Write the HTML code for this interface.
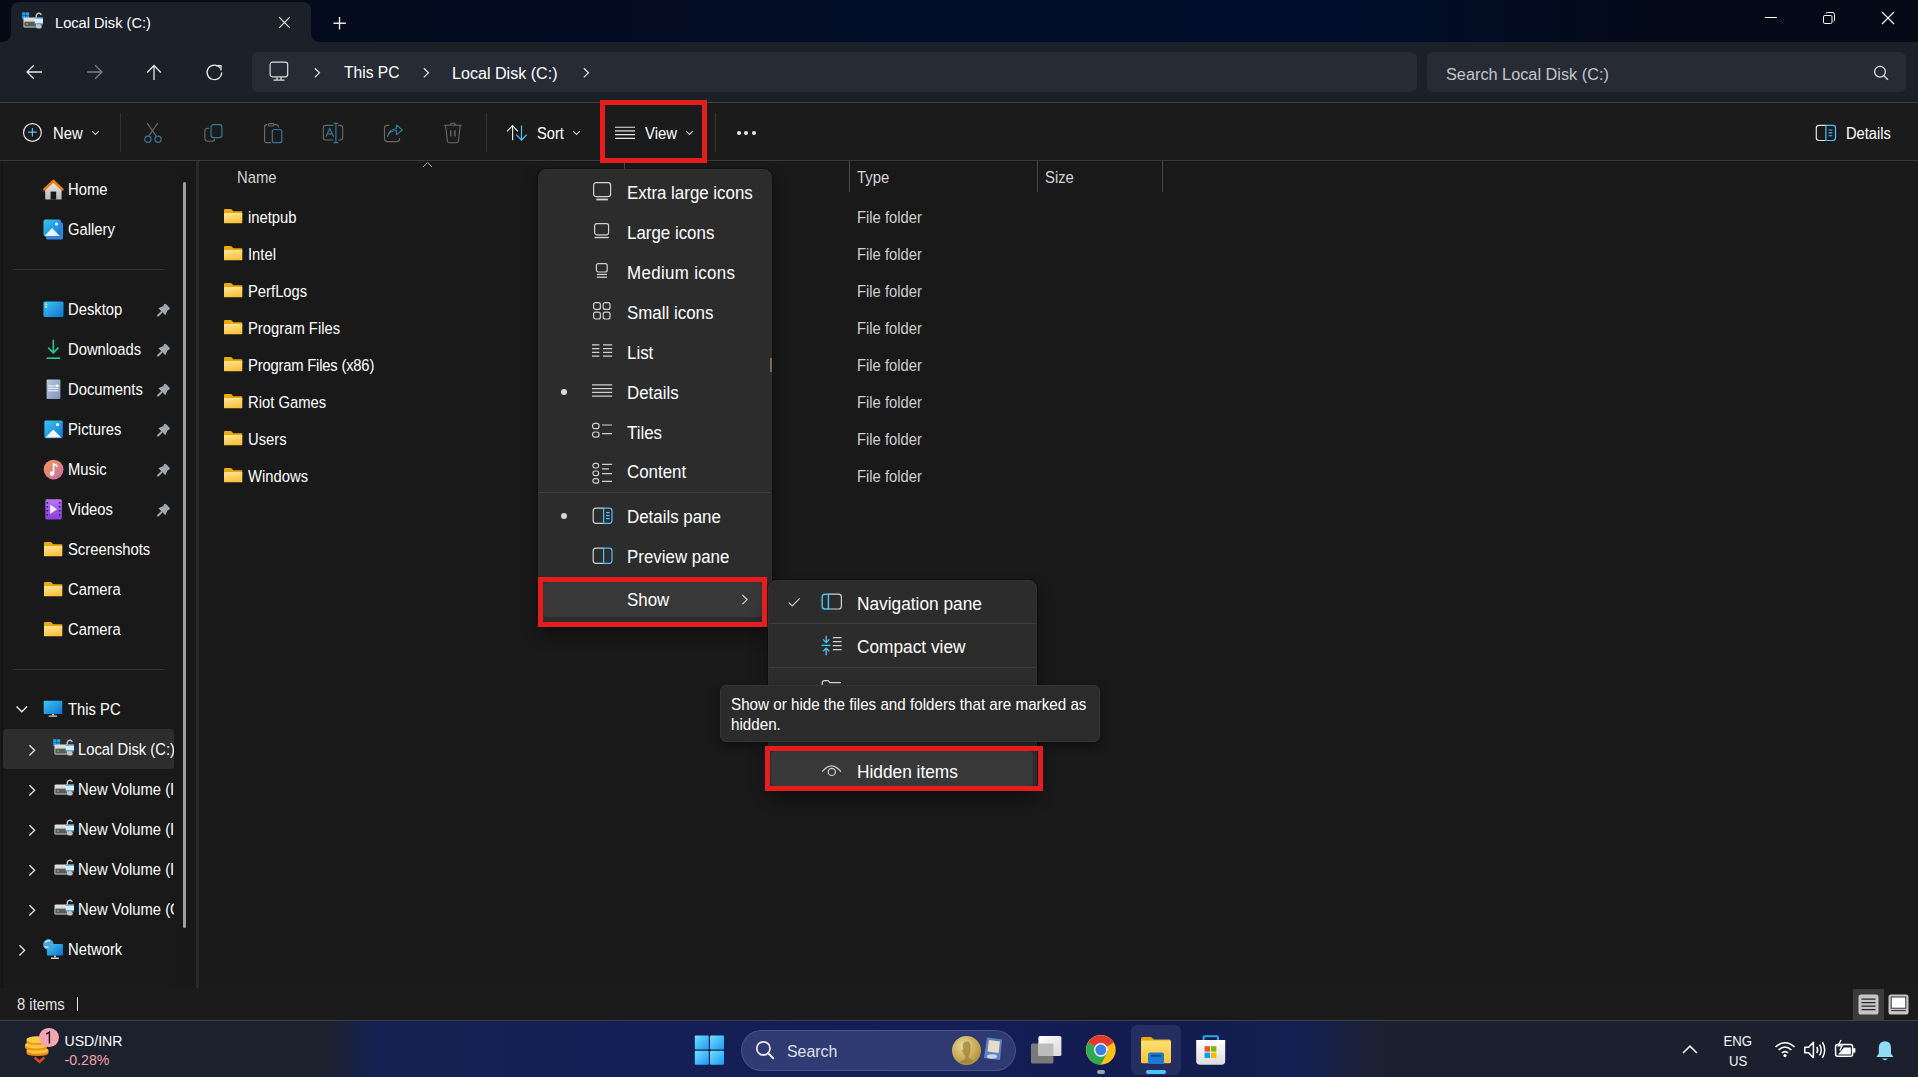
<!DOCTYPE html><html><head><meta charset="utf-8"><style>
*{margin:0;padding:0;box-sizing:border-box}
html,body{width:1918px;height:1077px;overflow:hidden;background:#191919}
body{position:relative;font-family:"Liberation Sans", sans-serif}
.t{position:absolute;white-space:nowrap;transform:scaleY(1.06)}
</style></head><body><div style="position:absolute;left:0px;top:0px;width:1918px;height:42px;background:linear-gradient(90deg,#040a18 0%,#030b1f 20%,#010c27 50%,#000d2a 70%,#040a18 88%,#050a17 100%)"></div><div style="position:absolute;left:11px;top:2px;width:300px;height:40px;background:#1c2029;border-radius:8px 8px 0 0"></div><div style="position:absolute;left:3px;top:34px;width:8px;height:8px;background:radial-gradient(circle at 0 0, transparent 7.5px, #1c2029 8px)"></div><div style="position:absolute;left:311px;top:34px;width:8px;height:8px;background:radial-gradient(circle at 100% 0, transparent 7.5px, #1c2029 8px)"></div><div style="position:absolute;left:0px;top:42px;width:1918px;height:60px;background:#1c2029"></div><div style="position:absolute;left:0px;top:102px;width:1918px;height:1px;background:#3c4048"></div><div style="position:absolute;left:252px;top:52px;width:1165px;height:40px;background:#272b35;border-radius:6px"></div><div style="position:absolute;left:1427px;top:52px;width:479px;height:40px;background:#272b35;border-radius:6px"></div><div style="position:absolute;left:0px;top:103px;width:1918px;height:57px;background:#1b1b1b"></div><div style="position:absolute;left:0px;top:160px;width:1918px;height:1px;background:#3a3a3a"></div><div style="position:absolute;left:0px;top:161px;width:197px;height:827px;background:#191919"></div><div style="position:absolute;left:175px;top:161px;width:21px;height:827px;background:#181818"></div><div style="position:absolute;left:196px;top:161px;width:3px;height:827px;background:#2a2a2a"></div><div style="position:absolute;left:199px;top:161px;width:1719px;height:827px;background:#191919"></div><div style="position:absolute;left:0px;top:988px;width:1918px;height:32px;background:#1b1b1b"></div><div style="position:absolute;left:0px;top:1020px;width:1918px;height:57px;background:linear-gradient(90deg,#1c212e 0%,#1c212e 17%,#132253 19.8%,#131f55 35%,#141d56 50%,#121c4e 62%,#131f52 67.8%,#1c202e 72.2%,#1c202e 100%)"></div><div style="position:absolute;left:0px;top:1020px;width:1918px;height:1px;background:#3a3f4d"></div><svg width="0" height="0" style="position:absolute"><defs>
<linearGradient id="fold" x1="0" y1="0" x2="0.3" y2="1"><stop offset="0" stop-color="#ffe79a"/><stop offset="1" stop-color="#f9c23c"/></linearGradient>
<linearGradient id="blue1" x1="0" y1="0" x2="1" y2="1"><stop offset="0" stop-color="#3ec6f0"/><stop offset="1" stop-color="#0d74d6"/></linearGradient>
<linearGradient id="music" x1="0" y1="0" x2="1" y2="1"><stop offset="0" stop-color="#f79a4e"/><stop offset="1" stop-color="#c56bb0"/></linearGradient>
<linearGradient id="video" x1="0" y1="0" x2="0" y2="1"><stop offset="0" stop-color="#b676f0"/><stop offset="1" stop-color="#8a3ee0"/></linearGradient>
<linearGradient id="house" x1="0" y1="0" x2="0" y2="1"><stop offset="0" stop-color="#e8e8e8"/><stop offset="1" stop-color="#b8b8b8"/></linearGradient>
<linearGradient id="doc" x1="0" y1="0" x2="1" y2="1"><stop offset="0" stop-color="#b8c8e0"/><stop offset="1" stop-color="#7d95b8"/></linearGradient>
</defs></svg><svg style="position:absolute;left:223.8px;top:208.8px" width="19" height="15" viewBox="0 0 19 15"><path d="M0 1 Q0 0 1 0 H6.6 Q7.3 0 7.8 0.6 L9.2 2.3 H17.4 Q18.3 2.3 18.3 3.2 V6 H0 Z" fill="#eaa90a"/><rect x="0" y="3.9" width="18.3" height="10.4" rx="0.9" fill="url(#fold)"/></svg><svg style="position:absolute;left:223.8px;top:245.8px" width="19" height="15" viewBox="0 0 19 15"><path d="M0 1 Q0 0 1 0 H6.6 Q7.3 0 7.8 0.6 L9.2 2.3 H17.4 Q18.3 2.3 18.3 3.2 V6 H0 Z" fill="#eaa90a"/><rect x="0" y="3.9" width="18.3" height="10.4" rx="0.9" fill="url(#fold)"/></svg><svg style="position:absolute;left:223.8px;top:282.8px" width="19" height="15" viewBox="0 0 19 15"><path d="M0 1 Q0 0 1 0 H6.6 Q7.3 0 7.8 0.6 L9.2 2.3 H17.4 Q18.3 2.3 18.3 3.2 V6 H0 Z" fill="#eaa90a"/><rect x="0" y="3.9" width="18.3" height="10.4" rx="0.9" fill="url(#fold)"/></svg><svg style="position:absolute;left:223.8px;top:319.8px" width="19" height="15" viewBox="0 0 19 15"><path d="M0 1 Q0 0 1 0 H6.6 Q7.3 0 7.8 0.6 L9.2 2.3 H17.4 Q18.3 2.3 18.3 3.2 V6 H0 Z" fill="#eaa90a"/><rect x="0" y="3.9" width="18.3" height="10.4" rx="0.9" fill="url(#fold)"/></svg><svg style="position:absolute;left:223.8px;top:356.8px" width="19" height="15" viewBox="0 0 19 15"><path d="M0 1 Q0 0 1 0 H6.6 Q7.3 0 7.8 0.6 L9.2 2.3 H17.4 Q18.3 2.3 18.3 3.2 V6 H0 Z" fill="#eaa90a"/><rect x="0" y="3.9" width="18.3" height="10.4" rx="0.9" fill="url(#fold)"/></svg><svg style="position:absolute;left:223.8px;top:393.8px" width="19" height="15" viewBox="0 0 19 15"><path d="M0 1 Q0 0 1 0 H6.6 Q7.3 0 7.8 0.6 L9.2 2.3 H17.4 Q18.3 2.3 18.3 3.2 V6 H0 Z" fill="#eaa90a"/><rect x="0" y="3.9" width="18.3" height="10.4" rx="0.9" fill="url(#fold)"/></svg><svg style="position:absolute;left:223.8px;top:430.8px" width="19" height="15" viewBox="0 0 19 15"><path d="M0 1 Q0 0 1 0 H6.6 Q7.3 0 7.8 0.6 L9.2 2.3 H17.4 Q18.3 2.3 18.3 3.2 V6 H0 Z" fill="#eaa90a"/><rect x="0" y="3.9" width="18.3" height="10.4" rx="0.9" fill="url(#fold)"/></svg><svg style="position:absolute;left:223.8px;top:467.8px" width="19" height="15" viewBox="0 0 19 15"><path d="M0 1 Q0 0 1 0 H6.6 Q7.3 0 7.8 0.6 L9.2 2.3 H17.4 Q18.3 2.3 18.3 3.2 V6 H0 Z" fill="#eaa90a"/><rect x="0" y="3.9" width="18.3" height="10.4" rx="0.9" fill="url(#fold)"/></svg><svg style="position:absolute;left:43.9px;top:541.9px" width="19" height="15" viewBox="0 0 19 15"><path d="M0 1 Q0 0 1 0 H6.6 Q7.3 0 7.8 0.6 L9.2 2.3 H17.4 Q18.3 2.3 18.3 3.2 V6 H0 Z" fill="#eaa90a"/><rect x="0" y="3.9" width="18.3" height="10.4" rx="0.9" fill="url(#fold)"/></svg><svg style="position:absolute;left:43.9px;top:581.9px" width="19" height="15" viewBox="0 0 19 15"><path d="M0 1 Q0 0 1 0 H6.6 Q7.3 0 7.8 0.6 L9.2 2.3 H17.4 Q18.3 2.3 18.3 3.2 V6 H0 Z" fill="#eaa90a"/><rect x="0" y="3.9" width="18.3" height="10.4" rx="0.9" fill="url(#fold)"/></svg><svg style="position:absolute;left:43.9px;top:621.9px" width="19" height="15" viewBox="0 0 19 15"><path d="M0 1 Q0 0 1 0 H6.6 Q7.3 0 7.8 0.6 L9.2 2.3 H17.4 Q18.3 2.3 18.3 3.2 V6 H0 Z" fill="#eaa90a"/><rect x="0" y="3.9" width="18.3" height="10.4" rx="0.9" fill="url(#fold)"/></svg><svg style="position:absolute;left:42.5px;top:178.5px" width="21" height="21" viewBox="0 0 21 21"><path d="M2.2 9.8 L10.4 2.8 L18.6 9.8 V19.4 Q18.6 20.6 17.4 20.6 H3.4 Q2.2 20.6 2.2 19.4 Z" fill="url(#house)"/><rect x="7.6" y="12.6" width="5.6" height="8" fill="#1b1b1b"/><path d="M1.4 10.4 L10.4 2 L19.4 10.4" fill="none" stroke="#f27a12" stroke-width="2.6" stroke-linejoin="round" stroke-linecap="round"/></svg><svg style="position:absolute;left:42.5px;top:218.5px" width="21" height="21" viewBox="0 0 21 21"><rect x="3" y="3.5" width="17" height="17" rx="1.5" fill="#3a86d8"/><rect x="0.5" y="0.5" width="17.6" height="17" rx="2" fill="url(#blue1)"/><path d="M1.5 17 L9 9 L17 17 Z" fill="#e8f3ff"/><circle cx="13.5" cy="5" r="1.5" fill="#fff"/></svg><svg style="position:absolute;left:42.5px;top:300.5px" width="21" height="17" viewBox="0 0 21 17"><rect x="0.5" y="0.5" width="20" height="15.5" rx="1.6" fill="url(#blue1)"/><rect x="2.5" y="2.5" width="1.6" height="1.6" fill="#e8f8ff"/><rect x="2.5" y="5" width="1.6" height="1.6" fill="#e8f8ff"/></svg><svg style="position:absolute;left:45.5px;top:338.5px" width="15" height="21" viewBox="0 0 15 21"><path d="M7.3 0.8 V13.5 M2.2 8.6 L7.3 13.8 L12.4 8.6" fill="none" stroke="#2cc59a" stroke-width="1.6"/><rect x="0.6" y="18.4" width="13.6" height="1.6" fill="#2cc59a"/></svg><svg style="position:absolute;left:45.5px;top:378.5px" width="15" height="21" viewBox="0 0 15 21"><rect x="0.6" y="0.6" width="13.8" height="19.4" rx="1.2" fill="url(#doc)"/><path d="M2.2 7 H9 M2.2 9.4 H12.6 M2.2 11.8 H12.6" stroke="#f4f8ff" stroke-width="1"/><rect x="9.6" y="5.6" width="3" height="2.4" fill="#fff"/></svg><svg style="position:absolute;left:43.5px;top:419.5px" width="19" height="19" viewBox="0 0 19 19"><rect x="0.4" y="0.4" width="18.4" height="17.8" rx="1.4" fill="url(#blue1)"/><path d="M1.5 17.6 L9.2 9.6 L17.4 17.6 Z" fill="#eef6ff"/><circle cx="13.6" cy="4.6" r="1.6" fill="#fff"/></svg><svg style="position:absolute;left:42.5px;top:458.5px" width="21" height="21" viewBox="0 0 21 21"><circle cx="10.6" cy="10.6" r="9.9" fill="url(#music)"/><circle cx="9" cy="14.6" r="2.3" fill="#fff"/><path d="M10.6 14.4 V5 Q13.8 5.4 14 8" fill="none" stroke="#fff" stroke-width="1.6"/></svg><svg style="position:absolute;left:44.5px;top:498.5px" width="17" height="21" viewBox="0 0 17 21"><rect x="0.4" y="0.2" width="16.4" height="20.2" rx="1.5" fill="url(#video)"/><g fill="#3a1670"><rect x="1.5" y="3" width="1.6" height="1.6"/><rect x="1.5" y="7" width="1.6" height="1.6"/><rect x="1.5" y="11" width="1.6" height="1.6"/><rect x="1.5" y="15" width="1.6" height="1.6"/><rect x="13.8" y="3" width="1.6" height="1.6"/><rect x="13.8" y="7" width="1.6" height="1.6"/><rect x="13.8" y="11" width="1.6" height="1.6"/><rect x="13.8" y="15" width="1.6" height="1.6"/></g><path d="M5.2 5.6 L12 10.3 L5.2 15 Z" fill="#f2e8ff"/></svg><svg style="position:absolute;left:156px;top:302.5px" width="15" height="15" viewBox="0 0 15 15"><path d="M8.2 1.2 Q9.2 0.2 10.2 1.2 L13.4 4.4 Q14.4 5.4 13.4 6.4 L11.6 7.2 L9.4 12.2 L2.4 5.2 L7.4 3 Z" fill="#a2a9ae"/><path d="M5.4 9.2 L2 12.6" stroke="#a2a9ae" stroke-width="2" stroke-linecap="round"/></svg><svg style="position:absolute;left:156px;top:342.5px" width="15" height="15" viewBox="0 0 15 15"><path d="M8.2 1.2 Q9.2 0.2 10.2 1.2 L13.4 4.4 Q14.4 5.4 13.4 6.4 L11.6 7.2 L9.4 12.2 L2.4 5.2 L7.4 3 Z" fill="#a2a9ae"/><path d="M5.4 9.2 L2 12.6" stroke="#a2a9ae" stroke-width="2" stroke-linecap="round"/></svg><svg style="position:absolute;left:156px;top:382.5px" width="15" height="15" viewBox="0 0 15 15"><path d="M8.2 1.2 Q9.2 0.2 10.2 1.2 L13.4 4.4 Q14.4 5.4 13.4 6.4 L11.6 7.2 L9.4 12.2 L2.4 5.2 L7.4 3 Z" fill="#a2a9ae"/><path d="M5.4 9.2 L2 12.6" stroke="#a2a9ae" stroke-width="2" stroke-linecap="round"/></svg><svg style="position:absolute;left:156px;top:422.5px" width="15" height="15" viewBox="0 0 15 15"><path d="M8.2 1.2 Q9.2 0.2 10.2 1.2 L13.4 4.4 Q14.4 5.4 13.4 6.4 L11.6 7.2 L9.4 12.2 L2.4 5.2 L7.4 3 Z" fill="#a2a9ae"/><path d="M5.4 9.2 L2 12.6" stroke="#a2a9ae" stroke-width="2" stroke-linecap="round"/></svg><svg style="position:absolute;left:156px;top:462.5px" width="15" height="15" viewBox="0 0 15 15"><path d="M8.2 1.2 Q9.2 0.2 10.2 1.2 L13.4 4.4 Q14.4 5.4 13.4 6.4 L11.6 7.2 L9.4 12.2 L2.4 5.2 L7.4 3 Z" fill="#a2a9ae"/><path d="M5.4 9.2 L2 12.6" stroke="#a2a9ae" stroke-width="2" stroke-linecap="round"/></svg><svg style="position:absolute;left:156px;top:502.5px" width="15" height="15" viewBox="0 0 15 15"><path d="M8.2 1.2 Q9.2 0.2 10.2 1.2 L13.4 4.4 Q14.4 5.4 13.4 6.4 L11.6 7.2 L9.4 12.2 L2.4 5.2 L7.4 3 Z" fill="#a2a9ae"/><path d="M5.4 9.2 L2 12.6" stroke="#a2a9ae" stroke-width="2" stroke-linecap="round"/></svg><div style="position:absolute;left:1px;top:161px;width:2px;height:827px;background:#151515"></div><div style="position:absolute;left:13px;top:269px;width:151px;height:1px;background:#333333"></div><div style="position:absolute;left:13px;top:669px;width:151px;height:1px;background:#333333"></div><div style="position:absolute;left:183px;top:182px;width:3px;height:746px;background:#9e9e9e;border-radius:2px"></div><svg style="position:absolute;left:14.5px;top:704.5px" width="14" height="9" viewBox="0 0 14 9"><path d="M1.5 1.5 L6.8 6.8 L12.1 1.5" fill="none" stroke="#e6e6e6" stroke-width="1.4"/></svg><svg style="position:absolute;left:43px;top:700px" width="20" height="18" viewBox="0 0 20 18"><rect x="0.7" y="0.7" width="18.5" height="13.3" rx="0.8" fill="url(#blue1)"/><rect x="9" y="14" width="2" height="1.6" fill="#c8c8c8"/><rect x="5.6" y="15.4" width="8.6" height="1.4" rx="0.6" fill="#d0d0d0"/></svg><div style="position:absolute;left:3px;top:729px;width:171px;height:40px;background:#2d2d2d;border-radius:4px"></div><svg style="position:absolute;left:28px;top:743.5px" width="9" height="13" viewBox="0 0 9 13"><path d="M1.4 1.2 L6.6 6.3 L1.4 11.4" fill="none" stroke="#e0e0e0" stroke-width="1.4"/></svg><svg style="position:absolute;left:52.6px;top:738.5px" width="22" height="17" viewBox="0 0 22 17"><rect x="0.2" y="0.3" width="3.3" height="3.3" fill="#1ea7f2"/><rect x="3.9" y="0.3" width="3.3" height="3.3" fill="#1ea7f2"/><rect x="0.2" y="4" width="3.3" height="3.3" fill="#1ea7f2"/><rect x="3.9" y="4" width="3.3" height="3.3" fill="#1a8ee0"/><rect x="1.5" y="5.6" width="13.5" height="10" rx="1.3" fill="#dcdcdc"/><rect x="2.3" y="9.6" width="11.8" height="5" fill="#5a5a5a"/><circle cx="5.1" cy="11.9" r="0.9" fill="#3de03d"/><path d="M14.3 5.8 V3.6 A2.6 2.6 0 0 1 19.3 2.9" fill="none" stroke="#c8c8c8" stroke-width="1.4"/><rect x="14" y="12" width="5.8" height="4.6" rx="2.2" fill="#c4c4c4"/><rect x="12.8" y="5.6" width="8.2" height="6.6" fill="#e8e8e8"/><rect x="12.8" y="5.6" width="8.2" height="1.1" fill="#2aa8f0"/><rect x="12.8" y="11.2" width="8.2" height="1.1" fill="#2aa8f0"/></svg><svg style="position:absolute;left:28px;top:783.5px" width="9" height="13" viewBox="0 0 9 13"><path d="M1.4 1.2 L6.6 6.3 L1.4 11.4" fill="none" stroke="#e0e0e0" stroke-width="1.4"/></svg><svg style="position:absolute;left:52.6px;top:778.5px" width="22" height="17" viewBox="0 0 22 17"><rect x="1.5" y="5.6" width="13.5" height="10" rx="1.3" fill="#dcdcdc"/><rect x="2.3" y="9.6" width="11.8" height="5" fill="#5a5a5a"/><circle cx="5.1" cy="11.9" r="0.9" fill="#3de03d"/><path d="M14.3 5.8 V3.6 A2.6 2.6 0 0 1 19.3 2.9" fill="none" stroke="#c8c8c8" stroke-width="1.4"/><rect x="14" y="12" width="5.8" height="4.6" rx="2.2" fill="#c4c4c4"/><rect x="12.8" y="5.6" width="8.2" height="6.6" fill="#e8e8e8"/><rect x="12.8" y="5.6" width="8.2" height="1.1" fill="#2aa8f0"/><rect x="12.8" y="11.2" width="8.2" height="1.1" fill="#2aa8f0"/></svg><svg style="position:absolute;left:28px;top:823.5px" width="9" height="13" viewBox="0 0 9 13"><path d="M1.4 1.2 L6.6 6.3 L1.4 11.4" fill="none" stroke="#e0e0e0" stroke-width="1.4"/></svg><svg style="position:absolute;left:52.6px;top:818.5px" width="22" height="17" viewBox="0 0 22 17"><rect x="1.5" y="5.6" width="13.5" height="10" rx="1.3" fill="#dcdcdc"/><rect x="2.3" y="9.6" width="11.8" height="5" fill="#5a5a5a"/><circle cx="5.1" cy="11.9" r="0.9" fill="#3de03d"/><path d="M14.3 5.8 V3.6 A2.6 2.6 0 0 1 19.3 2.9" fill="none" stroke="#c8c8c8" stroke-width="1.4"/><rect x="14" y="12" width="5.8" height="4.6" rx="2.2" fill="#c4c4c4"/><rect x="12.8" y="5.6" width="8.2" height="6.6" fill="#e8e8e8"/><rect x="12.8" y="5.6" width="8.2" height="1.1" fill="#2aa8f0"/><rect x="12.8" y="11.2" width="8.2" height="1.1" fill="#2aa8f0"/></svg><svg style="position:absolute;left:28px;top:863.5px" width="9" height="13" viewBox="0 0 9 13"><path d="M1.4 1.2 L6.6 6.3 L1.4 11.4" fill="none" stroke="#e0e0e0" stroke-width="1.4"/></svg><svg style="position:absolute;left:52.6px;top:858.5px" width="22" height="17" viewBox="0 0 22 17"><rect x="1.5" y="5.6" width="13.5" height="10" rx="1.3" fill="#dcdcdc"/><rect x="2.3" y="9.6" width="11.8" height="5" fill="#5a5a5a"/><circle cx="5.1" cy="11.9" r="0.9" fill="#3de03d"/><path d="M14.3 5.8 V3.6 A2.6 2.6 0 0 1 19.3 2.9" fill="none" stroke="#c8c8c8" stroke-width="1.4"/><rect x="14" y="12" width="5.8" height="4.6" rx="2.2" fill="#c4c4c4"/><rect x="12.8" y="5.6" width="8.2" height="6.6" fill="#e8e8e8"/><rect x="12.8" y="5.6" width="8.2" height="1.1" fill="#2aa8f0"/><rect x="12.8" y="11.2" width="8.2" height="1.1" fill="#2aa8f0"/></svg><svg style="position:absolute;left:28px;top:903.5px" width="9" height="13" viewBox="0 0 9 13"><path d="M1.4 1.2 L6.6 6.3 L1.4 11.4" fill="none" stroke="#e0e0e0" stroke-width="1.4"/></svg><svg style="position:absolute;left:52.6px;top:898.5px" width="22" height="17" viewBox="0 0 22 17"><rect x="1.5" y="5.6" width="13.5" height="10" rx="1.3" fill="#dcdcdc"/><rect x="2.3" y="9.6" width="11.8" height="5" fill="#5a5a5a"/><circle cx="5.1" cy="11.9" r="0.9" fill="#3de03d"/><path d="M14.3 5.8 V3.6 A2.6 2.6 0 0 1 19.3 2.9" fill="none" stroke="#c8c8c8" stroke-width="1.4"/><rect x="14" y="12" width="5.8" height="4.6" rx="2.2" fill="#c4c4c4"/><rect x="12.8" y="5.6" width="8.2" height="6.6" fill="#e8e8e8"/><rect x="12.8" y="5.6" width="8.2" height="1.1" fill="#2aa8f0"/><rect x="12.8" y="11.2" width="8.2" height="1.1" fill="#2aa8f0"/></svg><svg style="position:absolute;left:18px;top:943.5px" width="9" height="13" viewBox="0 0 9 13"><path d="M1.4 1.2 L6.6 6.3 L1.4 11.4" fill="none" stroke="#e0e0e0" stroke-width="1.4"/></svg><svg style="position:absolute;left:42px;top:938px" width="22" height="22" viewBox="0 0 22 22"><rect x="5" y="6" width="15.9" height="11.6" rx="0.6" fill="url(#blue1)"/><rect x="12" y="17.6" width="2" height="1.6" fill="#c8c8c8"/><rect x="8.8" y="19.4" width="8.2" height="1.5" rx="0.6" fill="#d0d0d0"/><circle cx="6.4" cy="6.4" r="5.3" fill="#4aa8d8"/><path d="M3 4.4 Q5 2.4 8 3 M2.8 8.5 Q4.5 9.6 6.5 9" stroke="#e8f6ff" stroke-width="1.2" fill="none"/></svg><svg style="position:absolute;left:421.5px;top:161px" width="12" height="7" viewBox="0 0 12 7"><path d="M1 6 L5.5 1.5 L10 6" fill="none" stroke="#a8a8a8" stroke-width="1"/></svg><div style="position:absolute;left:624px;top:161px;width:1px;height:31px;background:#4a4a4a"></div><div style="position:absolute;left:849px;top:161px;width:1px;height:31px;background:#4a4a4a"></div><div style="position:absolute;left:1037px;top:161px;width:1px;height:31px;background:#4a4a4a"></div><div style="position:absolute;left:1162px;top:161px;width:1px;height:31px;background:#4a4a4a"></div><div style="position:absolute;left:77px;top:997px;width:1px;height:14px;background:#e8e8e8"></div><div style="position:absolute;left:1853px;top:989px;width:31px;height:31px;background:#3b3b3b"></div><svg style="position:absolute;left:1858px;top:994px" width="21" height="21" viewBox="0 0 21 21"><rect x="0.5" y="0.5" width="20" height="20" rx="2.6" fill="#c6c6c6"/><path d="M3.5 5.2 H17.5 M3.5 8.7 H17.5 M3.5 12.2 H17.5 M3.5 15.7 H17.5" stroke="#262626" stroke-width="1.2"/></svg><svg style="position:absolute;left:1888px;top:993.5px" width="22" height="21" viewBox="0 0 22 21"><rect x="0.5" y="0.5" width="20" height="20" rx="2.6" fill="#c6c6c6"/><rect x="3.2" y="3" width="14.6" height="11.2" fill="#fff" stroke="#262626" stroke-width="0.9"/><path d="M3.2 16.6 H17.8" stroke="#262626" stroke-width="1"/></svg><div class="t" style="left:55.00px;top:16.31px;font-size:14.64px;line-height:14.64px;color:#fff;transform-origin:0 12.39px;">Local Disk (C:)</div><div class="t" style="left:344.00px;top:65.39px;font-size:15.6px;line-height:15.6px;color:#fff;transform-origin:0 13.21px;">This PC</div><div class="t" style="left:452.00px;top:65.37px;font-size:16.1px;line-height:16.1px;color:#fff;transform-origin:0 13.63px;">Local Disk (C:)</div><div class="t" style="left:1446.00px;top:65.50px;font-size:16.3px;line-height:16.3px;color:#c5c6c9;transform-origin:0 13.80px;">Search Local Disk (C:)</div><div class="t" style="left:53.00px;top:127.07px;font-size:14.8px;line-height:14.8px;color:#fff;transform-origin:0 12.53px;">New</div><div class="t" style="left:537.00px;top:127.36px;font-size:14.7px;line-height:14.7px;color:#fff;transform-origin:0 12.44px;">Sort</div><div class="t" style="left:645.00px;top:126.89px;font-size:14.9px;line-height:14.9px;color:#fff;transform-origin:0 12.61px;">View</div><div class="t" style="left:1846.00px;top:127.36px;font-size:14.7px;line-height:14.7px;color:#fff;transform-origin:0 12.44px;">Details</div><div class="t" style="left:68.00px;top:183.17px;font-size:14.8px;line-height:14.8px;color:#fff;transform-origin:0 12.53px;">Home</div><div class="t" style="left:68.00px;top:223.27px;font-size:14.8px;line-height:14.8px;color:#fff;transform-origin:0 12.53px;">Gallery</div><div class="t" style="left:68.00px;top:303.07px;font-size:14.8px;line-height:14.8px;color:#fff;transform-origin:0 12.53px;">Desktop</div><div class="t" style="left:68.00px;top:343.07px;font-size:14.8px;line-height:14.8px;color:#fff;transform-origin:0 12.53px;">Downloads</div><div class="t" style="left:68.00px;top:383.07px;font-size:14.8px;line-height:14.8px;color:#fff;transform-origin:0 12.53px;">Documents</div><div class="t" style="left:68.00px;top:423.07px;font-size:14.8px;line-height:14.8px;color:#fff;transform-origin:0 12.53px;">Pictures</div><div class="t" style="left:68.00px;top:463.07px;font-size:14.8px;line-height:14.8px;color:#fff;transform-origin:0 12.53px;">Music</div><div class="t" style="left:68.00px;top:503.07px;font-size:14.8px;line-height:14.8px;color:#fff;transform-origin:0 12.53px;">Videos</div><div class="t" style="left:68.00px;top:543.07px;font-size:14.8px;line-height:14.8px;color:#fff;transform-origin:0 12.53px;">Screenshots</div><div class="t" style="left:68.00px;top:583.07px;font-size:14.8px;line-height:14.8px;color:#fff;transform-origin:0 12.53px;">Camera</div><div class="t" style="left:68.00px;top:623.07px;font-size:14.8px;line-height:14.8px;color:#fff;transform-origin:0 12.53px;">Camera</div><div class="t" style="left:68.00px;top:703.07px;font-size:14.8px;line-height:14.8px;color:#fff;transform-origin:0 12.53px;">This PC</div><div class="t" style="left:78.00px;top:743.07px;font-size:14.8px;line-height:14.8px;color:#fff;transform-origin:0 12.53px;overflow:hidden;width:96px">Local Disk (C:)</div><div class="t" style="left:78.00px;top:783.07px;font-size:14.8px;line-height:14.8px;color:#fff;transform-origin:0 12.53px;overflow:hidden;width:96px">New Volume (I</div><div class="t" style="left:78.00px;top:823.07px;font-size:14.8px;line-height:14.8px;color:#fff;transform-origin:0 12.53px;overflow:hidden;width:96px">New Volume (I</div><div class="t" style="left:78.00px;top:863.07px;font-size:14.8px;line-height:14.8px;color:#fff;transform-origin:0 12.53px;overflow:hidden;width:96px">New Volume (I</div><div class="t" style="left:78.00px;top:903.07px;font-size:14.8px;line-height:14.8px;color:#fff;transform-origin:0 12.53px;overflow:hidden;width:96px">New Volume (G</div><div class="t" style="left:68.00px;top:943.07px;font-size:14.8px;line-height:14.8px;color:#fff;transform-origin:0 12.53px;">Network</div><div class="t" style="left:237.00px;top:170.93px;font-size:14.85px;line-height:14.85px;color:#d4d4d4;transform-origin:0 12.57px;">Name</div><div class="t" style="left:857.00px;top:170.93px;font-size:14.85px;line-height:14.85px;color:#d4d4d4;transform-origin:0 12.57px;">Type</div><div class="t" style="left:1045.00px;top:170.93px;font-size:14.85px;line-height:14.85px;color:#d4d4d4;transform-origin:0 12.57px;">Size</div><div class="t" style="left:248.00px;top:210.57px;font-size:14.8px;line-height:14.8px;color:#fff;transform-origin:0 12.53px;">inetpub</div><div class="t" style="left:857.00px;top:210.57px;font-size:14.8px;line-height:14.8px;color:#d0d0d0;transform-origin:0 12.53px;">File folder</div><div class="t" style="left:248.00px;top:247.57px;font-size:14.8px;line-height:14.8px;color:#fff;transform-origin:0 12.53px;">Intel</div><div class="t" style="left:857.00px;top:247.57px;font-size:14.8px;line-height:14.8px;color:#d0d0d0;transform-origin:0 12.53px;">File folder</div><div class="t" style="left:248.00px;top:284.57px;font-size:14.8px;line-height:14.8px;color:#fff;transform-origin:0 12.53px;">PerfLogs</div><div class="t" style="left:857.00px;top:284.57px;font-size:14.8px;line-height:14.8px;color:#d0d0d0;transform-origin:0 12.53px;">File folder</div><div class="t" style="left:248.00px;top:321.57px;font-size:14.8px;line-height:14.8px;color:#fff;transform-origin:0 12.53px;">Program Files</div><div class="t" style="left:857.00px;top:321.57px;font-size:14.8px;line-height:14.8px;color:#d0d0d0;transform-origin:0 12.53px;">File folder</div><div class="t" style="left:248.00px;top:358.57px;font-size:14.8px;line-height:14.8px;color:#fff;transform-origin:0 12.53px;letter-spacing:-0.2px">Program Files (x86)</div><div class="t" style="left:857.00px;top:358.57px;font-size:14.8px;line-height:14.8px;color:#d0d0d0;transform-origin:0 12.53px;">File folder</div><div class="t" style="left:248.00px;top:395.57px;font-size:14.8px;line-height:14.8px;color:#fff;transform-origin:0 12.53px;">Riot Games</div><div class="t" style="left:857.00px;top:395.57px;font-size:14.8px;line-height:14.8px;color:#d0d0d0;transform-origin:0 12.53px;">File folder</div><div class="t" style="left:248.00px;top:432.57px;font-size:14.8px;line-height:14.8px;color:#fff;transform-origin:0 12.53px;">Users</div><div class="t" style="left:857.00px;top:432.57px;font-size:14.8px;line-height:14.8px;color:#d0d0d0;transform-origin:0 12.53px;">File folder</div><div class="t" style="left:248.00px;top:469.57px;font-size:14.8px;line-height:14.8px;color:#fff;transform-origin:0 12.53px;">Windows</div><div class="t" style="left:857.00px;top:469.57px;font-size:14.8px;line-height:14.8px;color:#d0d0d0;transform-origin:0 12.53px;">File folder</div><div class="t" style="left:17.00px;top:998.07px;font-size:14.8px;line-height:14.8px;color:#e0e0e0;transform-origin:0 12.53px;">8 items</div><div style="position:absolute;left:538px;top:169px;width:234px;height:458px;background:#2c2c2c;border-radius:8px;border:1px solid #323232;box-shadow:0 0 0 1px rgba(0,0,0,0.3),0 8px 16px rgba(0,0,0,0.4)"></div><div style="position:absolute;left:539px;top:492px;width:232px;height:1px;background:#3d3d3d"></div><div style="position:absolute;left:543px;top:582px;width:219px;height:35px;background:#383838;border-radius:4px"></div><div style="position:absolute;left:768px;top:580px;width:269px;height:211px;background:#2c2c2c;border-radius:8px;border:1px solid #323232;box-shadow:0 0 0 1px rgba(0,0,0,0.3),0 8px 16px rgba(0,0,0,0.4)"></div><div style="position:absolute;left:769px;top:623px;width:267px;height:1px;background:#3d3d3d"></div><div style="position:absolute;left:769px;top:667px;width:267px;height:1px;background:#3d3d3d"></div><div style="position:absolute;left:771px;top:751px;width:262px;height:35px;background:#383838;border-radius:4px"></div><div style="position:absolute;left:720px;top:685px;width:380px;height:57px;background:#2b2b2b;border-radius:6px;border:1px solid #353535;box-shadow:0 4px 10px rgba(0,0,0,0.4)"></div><div class="t" style="left:627.00px;top:185.69px;font-size:16.9px;line-height:16.9px;color:#fff;transform-origin:0 14.31px;">Extra large icons</div><div class="t" style="left:627.00px;top:225.99px;font-size:16.9px;line-height:16.9px;color:#fff;transform-origin:0 14.31px;">Large icons</div><div class="t" style="left:627.00px;top:265.99px;font-size:16.9px;line-height:16.9px;color:#fff;transform-origin:0 14.31px;letter-spacing:0.35px">Medium icons</div><div class="t" style="left:627.00px;top:305.99px;font-size:16.9px;line-height:16.9px;color:#fff;transform-origin:0 14.31px;">Small icons</div><div class="t" style="left:627.00px;top:345.99px;font-size:16.9px;line-height:16.9px;color:#fff;transform-origin:0 14.31px;">List</div><div class="t" style="left:627.00px;top:385.99px;font-size:16.9px;line-height:16.9px;color:#fff;transform-origin:0 14.31px;">Details</div><div class="t" style="left:627.00px;top:425.59px;font-size:16.9px;line-height:16.9px;color:#fff;transform-origin:0 14.31px;">Tiles</div><div class="t" style="left:627.00px;top:465.49px;font-size:16.9px;line-height:16.9px;color:#fff;transform-origin:0 14.31px;">Content</div><div class="t" style="left:627.00px;top:509.99px;font-size:16.9px;line-height:16.9px;color:#fff;transform-origin:0 14.31px;">Details pane</div><div class="t" style="left:627.00px;top:549.99px;font-size:16.9px;line-height:16.9px;color:#fff;transform-origin:0 14.31px;">Preview pane</div><div class="t" style="left:627.00px;top:593.49px;font-size:16.9px;line-height:16.9px;color:#fff;transform-origin:0 14.31px;">Show</div><div class="t" style="left:857.00px;top:595.96px;font-size:17.3px;line-height:17.3px;color:#fff;transform-origin:0 14.64px;">Navigation pane</div><div class="t" style="left:857.00px;top:639.46px;font-size:17.3px;line-height:17.3px;color:#fff;transform-origin:0 14.64px;">Compact view</div><div class="t" style="left:857.00px;top:763.76px;font-size:17.3px;line-height:17.3px;color:#fff;transform-origin:0 14.64px;">Hidden items</div><div class="t" style="left:731.00px;top:696.73px;font-size:15.2px;line-height:15.2px;color:#fff;transform-origin:0 12.87px;">Show or hide the files and folders that are marked as</div><div class="t" style="left:731.00px;top:717.03px;font-size:15.2px;line-height:15.2px;color:#fff;transform-origin:0 12.87px;">hidden.</div><svg style="position:absolute;left:592px;top:181px" width="21" height="21" viewBox="0 0 21 21"><rect x="1.6" y="1.6" width="17" height="14" rx="2.6" fill="none" stroke="#d2d2d2" stroke-width="1.2"/><rect x="4.3" y="17.6" width="11.6" height="1.8" fill="#d2d2d2"/></svg><svg style="position:absolute;left:593px;top:222px" width="18" height="18" viewBox="0 0 18 18"><rect x="1.6" y="1.6" width="14" height="11.2" rx="2.2" fill="none" stroke="#d2d2d2" stroke-width="1.2"/><rect x="1.6" y="14.8" width="14.2" height="1.4" fill="#d2d2d2"/></svg><svg style="position:absolute;left:595px;top:262px" width="14" height="18" viewBox="0 0 14 18"><rect x="1.4" y="1.6" width="10.8" height="8.4" rx="2" fill="none" stroke="#d2d2d2" stroke-width="1.2"/><rect x="1.8" y="11.8" width="10.2" height="1.3" fill="#d2d2d2"/><rect x="1.8" y="14.6" width="10.2" height="1.3" fill="#d2d2d2"/></svg><svg style="position:absolute;left:592px;top:301px" width="21" height="20" viewBox="0 0 21 20"><rect x="1.6" y="1.6" width="6.8" height="6.8" rx="2" fill="none" stroke="#d2d2d2" stroke-width="1.2"/><rect x="11.2" y="1.6" width="6.8" height="6.8" rx="2" fill="none" stroke="#d2d2d2" stroke-width="1.2"/><rect x="1.6" y="11.2" width="6.8" height="6.8" rx="2" fill="none" stroke="#d2d2d2" stroke-width="1.2"/><rect x="11.2" y="11.2" width="6.8" height="6.8" rx="2" fill="none" stroke="#d2d2d2" stroke-width="1.2"/></svg><svg style="position:absolute;left:591px;top:343px" width="23" height="16" viewBox="0 0 23 16"><path d="M1 1.8 H8.4 M1 5.6 H8.4 M1 9.4 H8.4 M1 13.2 H8.4 M12 1.8 H21.2 M12 5.6 H21.2 M12 9.4 H21.2 M12 13.2 H21.2" stroke="#d2d2d2" stroke-width="1.2"/></svg><svg style="position:absolute;left:591px;top:383px" width="23" height="16" viewBox="0 0 23 16"><path d="M1 1.8 H21.2 M1 5.6 H21.2 M1 9.4 H21.2 M1 13.2 H21.2" stroke="#d2d2d2" stroke-width="1.2"/></svg><svg style="position:absolute;left:591px;top:422px" width="23" height="18" viewBox="0 0 23 18"><rect x="1.6" y="1.4" width="6.4" height="5.2" rx="2.2" fill="none" stroke="#d2d2d2" stroke-width="1.2"/><rect x="1.6" y="10" width="6.4" height="5.2" rx="2.2" fill="none" stroke="#d2d2d2" stroke-width="1.2"/><path d="M11 3 H21 M11 11.6 H21" stroke="#d2d2d2" stroke-width="1.2"/></svg><svg style="position:absolute;left:591px;top:462px" width="23" height="24" viewBox="0 0 23 24"><rect x="2" y="1.4" width="5.6" height="4.6" rx="2" fill="none" stroke="#d2d2d2" stroke-width="1.2"/><rect x="2" y="9" width="5.6" height="4.6" rx="2" fill="none" stroke="#d2d2d2" stroke-width="1.2"/><rect x="2" y="16.6" width="5.6" height="4.6" rx="2" fill="none" stroke="#d2d2d2" stroke-width="1.2"/><path d="M11 2.4 H21 M11 6.8 H18 M11 11.6 H21 M11 19.4 H21" stroke="#d2d2d2" stroke-width="1.2"/></svg><svg style="position:absolute;left:591.5px;top:506.5px" width="22" height="18" viewBox="0 0 22 18"><path d="M11.6 1.2 H4 Q1.2 1.2 1.2 4 V13.6 Q1.2 16.4 4 16.4 H11.6" fill="none" stroke="#d2d2d2" stroke-width="1.2"/><path d="M11.6 1.2 H17.2 Q20 1.2 20 4 V13.6 Q20 16.4 17.2 16.4 H11.6 Z" fill="none" stroke="#4cc2ff" stroke-width="1.2"/><path d="M14 5.6 H17.6 M14 8.6 H17.6 M14 11.6 H17.6" stroke="#4cc2ff" stroke-width="1.1"/></svg><svg style="position:absolute;left:591.5px;top:546.5px" width="22" height="18" viewBox="0 0 22 18"><path d="M11.6 1.2 H4 Q1.2 1.2 1.2 4 V13.6 Q1.2 16.4 4 16.4 H11.6" fill="none" stroke="#d2d2d2" stroke-width="1.2"/><path d="M11.6 1.2 H17.2 Q20 1.2 20 4 V13.6 Q20 16.4 17.2 16.4 H11.6 Z" fill="none" stroke="#4cc2ff" stroke-width="1.2"/></svg><div style="position:absolute;left:561.4px;top:388.5px;width:6px;height:6px;border-radius:50%;background:#d8d8d8"></div><div style="position:absolute;left:561.4px;top:512.5px;width:6px;height:6px;border-radius:50%;background:#d8d8d8"></div><svg style="position:absolute;left:741px;top:594px" width="9" height="12" viewBox="0 0 9 12"><path d="M1.4 1 L6.2 5.6 L1.4 10.2" fill="none" stroke="#d8d8d8" stroke-width="1.1"/></svg><svg style="position:absolute;left:787px;top:597px" width="15" height="11" viewBox="0 0 15 11"><path d="M1.8 5.6 L5.2 9 L12.8 1.4" fill="none" stroke="#cfcfcf" stroke-width="1.2"/></svg><svg style="position:absolute;left:821px;top:593px" width="22" height="18" viewBox="0 0 22 18"><path d="M7.4 1.2 H17.6 Q20.4 1.2 20.4 4 V13.2 Q20.4 16 17.6 16 H7.4" fill="none" stroke="#d2d2d2" stroke-width="1.2"/><path d="M7.4 1.2 H4 Q1.2 1.2 1.2 4 V13.2 Q1.2 16 4 16 H7.4 Z" fill="none" stroke="#4cc2ff" stroke-width="1.4"/></svg><svg style="position:absolute;left:821px;top:635px" width="22" height="22" viewBox="0 0 22 22"><path d="M5.2 0.8 V7.4 M2 4.4 L5.2 7.6 L8.4 4.4 M5.2 20.2 V13.2 M2 16.4 L5.2 13.2 L8.4 16.4 M0.6 10.3 H9.6" fill="none" stroke="#4cc2ff" stroke-width="1.3"/><path d="M11.8 2.6 H20.6 M11.8 6.6 H20.6 M11.8 10.6 H20.6 M11.8 14.6 H20.6" stroke="#d2d2d2" stroke-width="1.2"/></svg><svg style="position:absolute;left:821px;top:679px" width="22" height="6" viewBox="0 0 22 6"><path d="M1.2 7 V4 Q1.2 1.6 3.6 1.6 H7 L9 3.6 H20" fill="none" stroke="#d2d2d2" stroke-width="1.2"/></svg><svg style="position:absolute;left:821px;top:762px" width="22" height="15" viewBox="0 0 22 15"><path d="M1.2 9.6 Q10.6 -2 20 9.6" fill="none" stroke="#d2d2d2" stroke-width="1.2"/><circle cx="10.8" cy="9.9" r="3.6" fill="none" stroke="#d2d2d2" stroke-width="1.2"/></svg><div style="position:absolute;left:770px;top:358px;width:2px;height:14px;background:#7a6a50"></div><svg style="position:absolute;left:21.5px;top:11.5px" width="22" height="17" viewBox="0 0 22 17"><rect x="0.2" y="0.3" width="3.3" height="3.3" fill="#1ea7f2"/><rect x="3.9" y="0.3" width="3.3" height="3.3" fill="#1ea7f2"/><rect x="0.2" y="4" width="3.3" height="3.3" fill="#1ea7f2"/><rect x="3.9" y="4" width="3.3" height="3.3" fill="#1a8ee0"/><rect x="1.5" y="5.6" width="13.5" height="10" rx="1.3" fill="#dcdcdc"/><rect x="2.3" y="9.6" width="11.8" height="5" fill="#5a5a5a"/><circle cx="5.1" cy="11.9" r="0.9" fill="#3de03d"/><path d="M14.3 5.8 V3.6 A2.6 2.6 0 0 1 19.3 2.9" fill="none" stroke="#c8c8c8" stroke-width="1.4"/><rect x="14" y="12" width="5.8" height="4.6" rx="2.2" fill="#c4c4c4"/><rect x="12.8" y="5.6" width="8.2" height="6.6" fill="#e8e8e8"/><rect x="12.8" y="5.6" width="8.2" height="1.1" fill="#2aa8f0"/><rect x="12.8" y="11.2" width="8.2" height="1.1" fill="#2aa8f0"/></svg><svg style="position:absolute;left:278px;top:16px" width="14" height="13" viewBox="0 0 14 13"><path d="M1.2 1.2 L11.8 11.8 M11.8 1.2 L1.2 11.8" stroke="#e8e8e8" stroke-width="1.2"/></svg><svg style="position:absolute;left:332px;top:16px" width="15" height="15" viewBox="0 0 15 15"><path d="M7.5 1 V13.5 M1.5 7.2 H13.8" stroke="#e8e8e8" stroke-width="1.4"/></svg><svg style="position:absolute;left:1764px;top:16px" width="14" height="4" viewBox="0 0 14 4"><path d="M0.8 1.5 H13" stroke="#fff" stroke-width="1"/></svg><svg style="position:absolute;left:1822px;top:11px" width="14" height="14" viewBox="0 0 14 14"><rect x="1.5" y="4.5" width="8.5" height="8" rx="1.3" fill="none" stroke="#fff" stroke-width="1"/><path d="M4 2.5 Q4 1.5 5.5 1.5 H10.5 Q12.5 1.5 12.5 3.5 V9 Q12.5 10 11.5 10.2" fill="none" stroke="#fff" stroke-width="1"/></svg><svg style="position:absolute;left:1881px;top:11px" width="14" height="14" viewBox="0 0 14 14"><path d="M1 1 L13 13 M13 1 L1 13" stroke="#fff" stroke-width="1.1"/></svg><svg style="position:absolute;left:25px;top:63px" width="19" height="18" viewBox="0 0 19 18"><path d="M2 9 H17 M8.8 2.2 L2 9 L8.8 15.8" fill="none" stroke="#e6e6e6" stroke-width="1.3"/></svg><svg style="position:absolute;left:85px;top:63px" width="19" height="18" viewBox="0 0 19 18"><path d="M2 9 H17 M10.2 2.2 L17 9 L10.2 15.8" fill="none" stroke="#7c7f86" stroke-width="1.3"/></svg><svg style="position:absolute;left:146px;top:64px" width="16" height="17" viewBox="0 0 16 17"><path d="M8 1.5 V16 M1.2 8.5 L8 1.5 L14.8 8.5" fill="none" stroke="#e6e6e6" stroke-width="1.3"/></svg><svg style="position:absolute;left:205px;top:63px" width="19" height="19" viewBox="0 0 19 19"><path d="M15.4 5.2 A7.3 7.3 0 1 0 16.7 9.5" fill="none" stroke="#e6e6e6" stroke-width="1.3"/><path d="M11.2 2.6 H16 V7.4" fill="none" stroke="#e6e6e6" stroke-width="1.3"/></svg><svg style="position:absolute;left:269px;top:61px" width="20" height="21" viewBox="0 0 20 21"><rect x="1.1" y="1.1" width="17.6" height="14.8" rx="2.6" fill="none" stroke="#dcdcdc" stroke-width="1.2"/><path d="M8 16 V18.6 M12 16 V18.6 M4.5 19.2 H15.5" fill="none" stroke="#dcdcdc" stroke-width="1.2"/></svg><svg style="position:absolute;left:313px;top:67px" width="9" height="12" viewBox="0 0 9 12"><path d="M1.8 1.2 L6.5 5.8 L1.8 10.4" fill="none" stroke="#e6e6e6" stroke-width="1.2"/></svg><svg style="position:absolute;left:422px;top:67px" width="9" height="12" viewBox="0 0 9 12"><path d="M1.8 1.2 L6.5 5.8 L1.8 10.4" fill="none" stroke="#e6e6e6" stroke-width="1.2"/></svg><svg style="position:absolute;left:582px;top:67px" width="9" height="12" viewBox="0 0 9 12"><path d="M1.8 1.2 L6.5 5.8 L1.8 10.4" fill="none" stroke="#e6e6e6" stroke-width="1.2"/></svg><svg style="position:absolute;left:1872px;top:64px" width="18" height="18" viewBox="0 0 18 18"><circle cx="8" cy="7.7" r="5.4" fill="none" stroke="#dedede" stroke-width="1.3"/><path d="M11.9 11.7 L16 15.8" stroke="#dedede" stroke-width="1.4"/></svg><svg style="position:absolute;left:22px;top:122px" width="21" height="21" viewBox="0 0 21 21"><circle cx="10.4" cy="10.5" r="8.9" fill="none" stroke="#e4e4e4" stroke-width="1.2"/><path d="M10.4 6 V14.4 M6 10.2 H14.8" stroke="#4cc2ff" stroke-width="1.2"/></svg><svg style="position:absolute;left:91px;top:130px" width="9" height="6" viewBox="0 0 9 6"><path d="M1.2 1.2 L4.5 4.5 L7.8 1.2" fill="none" stroke="#cfcfcf" stroke-width="1.1"/></svg><svg style="position:absolute;left:572px;top:130px" width="9" height="6" viewBox="0 0 9 6"><path d="M1.2 1.2 L4.5 4.5 L7.8 1.2" fill="none" stroke="#cfcfcf" stroke-width="1.1"/></svg><svg style="position:absolute;left:685px;top:130px" width="9" height="6" viewBox="0 0 9 6"><path d="M1.2 1.2 L4.5 4.5 L7.8 1.2" fill="none" stroke="#cfcfcf" stroke-width="1.1"/></svg><div style="position:absolute;left:120px;top:113px;width:1px;height:39px;background:#333333"></div><div style="position:absolute;left:486px;top:113px;width:1px;height:39px;background:#333333"></div><div style="position:absolute;left:715px;top:113px;width:1px;height:39px;background:#333333"></div><svg style="position:absolute;left:142px;top:122px" width="21" height="22" viewBox="0 0 21 22"><path d="M5.1 1.1 L14.6 14.6 M15.8 1.1 L6.3 14.6" stroke="#6a6a6a" stroke-width="1.1"/><circle cx="5.9" cy="17.3" r="3.1" fill="none" stroke="#36789a" stroke-width="1.2"/><circle cx="16" cy="17.3" r="3.1" fill="none" stroke="#36789a" stroke-width="1.2"/></svg><svg style="position:absolute;left:203px;top:123px" width="20" height="20" viewBox="0 0 20 20"><path d="M6 5.3 H4.5 Q1.9 5.3 1.9 8 V15.8 Q1.9 18.3 4.5 18.3 H9 Q11.6 18.3 11.6 16" fill="none" stroke="#6a6a6a" stroke-width="1.1"/><rect x="8" y="1.6" width="10.9" height="13" rx="2.6" fill="none" stroke="#36789a" stroke-width="1.2"/></svg><svg style="position:absolute;left:263px;top:122px" width="20" height="22" viewBox="0 0 20 22"><path d="M4.2 2.6 H3.6 Q1.6 2.6 1.6 4.8 V18.5 Q1.6 20.6 3.6 20.6 H8" fill="none" stroke="#6a6a6a" stroke-width="1.1"/><path d="M10.8 2.6 H13 Q15.4 2.6 15.4 4.8 V5.5" fill="none" stroke="#6a6a6a" stroke-width="1.1"/><rect x="5.4" y="1.6" width="5.6" height="2.4" rx="1.2" fill="none" stroke="#6a6a6a" stroke-width="1.1"/><rect x="9.3" y="7.5" width="9.5" height="13.2" rx="2" fill="none" stroke="#36789a" stroke-width="1.2"/></svg><svg style="position:absolute;left:322px;top:122px" width="22" height="22" viewBox="0 0 22 22"><path d="M11.5 3.4 H3.6 Q1.3 3.4 1.3 5.8 V15.6 Q1.3 18 3.6 18 H11.2 M16.2 3.4 H18.4 Q20.7 3.4 20.7 5.8 V15.6 Q20.7 18 18.4 18 H16.2" fill="none" stroke="#6a6a6a" stroke-width="1.1"/><path d="M4 14.8 L7.8 6.4 L11.6 14.8 M5.3 11.9 H10.3" fill="none" stroke="#36789a" stroke-width="1.1"/><path d="M13.9 1.3 V20.7 M11.6 1.3 H16.2 M11.6 20.7 H16.2" fill="none" stroke="#36789a" stroke-width="1.2"/></svg><svg style="position:absolute;left:383px;top:123px" width="21" height="20" viewBox="0 0 21 20"><path d="M6.2 2.4 H4.3 Q1.5 2.4 1.5 5.2 V15.8 Q1.5 18.6 4.3 18.6 H13.8 Q16.6 18.6 16.6 15.8 V15" fill="none" stroke="#6a6a6a" stroke-width="1.1"/><path d="M4.5 13.6 Q6.5 7.5 13.5 7.5 V11.8 L19.3 7 L13.5 1.8 V5.8 Q6 6.2 4.5 13.6 Z" fill="none" stroke="#36789a" stroke-width="1.1" stroke-linejoin="round"/></svg><svg style="position:absolute;left:443px;top:122px" width="20" height="22" viewBox="0 0 20 22"><path d="M1 3.3 H18.7 M7.4 3.3 V2.7 Q7.4 1.3 9 1.3 H10.8 Q12.4 1.3 12.4 2.7 V3.3" fill="none" stroke="#6a6a6a" stroke-width="1.1"/><path d="M2.6 3.5 L4.4 19 Q4.6 20.7 6.4 20.7 H13.4 Q15.2 20.7 15.4 19 L17.2 3.5" fill="none" stroke="#6a6a6a" stroke-width="1.1"/><path d="M7.8 8.3 V14.4 M11.9 8.3 V14.4" stroke="#6a6a6a" stroke-width="1.4"/></svg><svg style="position:absolute;left:505px;top:124px" width="23" height="18" viewBox="0 0 23 18"><path d="M7.6 1.5 V16.2 M2 7.3 L7.6 1.6 L12.8 7.3" fill="none" stroke="#e8e8e8" stroke-width="1.2"/><path d="M16.5 1.6 V16.2 M11.2 10.7 L16.5 16.2 L21.7 10.7" fill="none" stroke="#4cc2ff" stroke-width="1.2"/></svg><svg style="position:absolute;left:614px;top:125px" width="22" height="16" viewBox="0 0 22 16"><path d="M1 2.2 H21 M1 5.9 H21 M1 9.6 H21 M1 13.4 H21" stroke="#e8e8e8" stroke-width="1.1"/></svg><div style="position:absolute;left:736.5px;top:131px;width:4px;height:4px;border-radius:50%;background:#e8e8e8"></div><div style="position:absolute;left:744px;top:131px;width:4px;height:4px;border-radius:50%;background:#e8e8e8"></div><div style="position:absolute;left:751.5px;top:131px;width:4px;height:4px;border-radius:50%;background:#e8e8e8"></div><svg style="position:absolute;left:1815px;top:124px" width="22" height="18" viewBox="0 0 22 18"><path d="M10.9 1.3 H4 Q1.3 1.3 1.3 4 V13.8 Q1.3 16.5 4 16.5 H10.9" fill="none" stroke="#e4e4e4" stroke-width="1.2"/><path d="M10.9 1.3 H17.8 Q20.5 1.3 20.5 4 V13.8 Q20.5 16.5 17.8 16.5 H10.9 Z" fill="none" stroke="#4cc2ff" stroke-width="1.2"/><path d="M13.6 6 H17.4 M13.6 8.9 H17.4 M13.6 11.8 H17.4" stroke="#4cc2ff" stroke-width="1.1"/></svg><svg width="0" height="0" style="position:absolute"><defs>
<linearGradient id="coin" x1="0" y1="0" x2="0" y2="1"><stop offset="0" stop-color="#ffc53a"/><stop offset="1" stop-color="#f59a16"/></linearGradient>
<linearGradient id="winl" x1="0" y1="0" x2="1" y2="1"><stop offset="0" stop-color="#6fe0ff"/><stop offset="1" stop-color="#1d9af0"/></linearGradient>
<radialGradient id="medal" cx="0.4" cy="0.35" r="0.7"><stop offset="0" stop-color="#e8d48a"/><stop offset="0.7" stop-color="#b89a40"/><stop offset="1" stop-color="#8a7028"/></radialGradient>
<linearGradient id="tfold" x1="0" y1="0" x2="0" y2="1"><stop offset="0" stop-color="#ffe072"/><stop offset="1" stop-color="#f7c43a"/></linearGradient>
<linearGradient id="store" x1="0" y1="0" x2="0" y2="1"><stop offset="0" stop-color="#ffffff"/><stop offset="1" stop-color="#dcdcdc"/></linearGradient>
<linearGradient id="tv1" x1="0" y1="0" x2="1" y2="1"><stop offset="0" stop-color="#ffffff"/><stop offset="1" stop-color="#d8d8d8"/></linearGradient>
</defs></svg><svg style="position:absolute;left:22px;top:1030px" width="34" height="38" viewBox="0 0 34 38"><path d="M4.5 20.5 V23 Q4.5 26 15.5 26 Q26.5 26 26.5 23 V20.5 Z" fill="#e88a12"/><ellipse cx="15.5" cy="20.5" rx="11" ry="3.4" fill="#ffbe38"/><path d="M3 15 V17.6 Q3 20.6 14 20.6 Q25 20.6 25 17.6 V15 Z" fill="#ec9414"/><ellipse cx="14" cy="15" rx="11" ry="3.4" fill="#ffc43e"/><path d="M4.5 9.6 V12 Q4.5 15 15 15 Q25.5 15 25.5 12 V9.6 Z" fill="#f09a18"/><ellipse cx="15" cy="9.6" rx="10.5" ry="3.3" fill="#ffcc48"/><path d="M12.6 27.6 L17.5 31.8 L22.4 27.6" fill="none" stroke="#d9471c" stroke-width="2.6"/></svg><div style="position:absolute;left:39.3px;top:1027.9px;width:19.4px;height:19.4px;border-radius:50%;background:#f5a5b2"></div><svg style="position:absolute;left:44px;top:1031px" width="10" height="14" viewBox="0 0 10 14"><path d="M2.2 3.2 L5.4 1.2 V12.4" fill="none" stroke="#151515" stroke-width="1.4"/></svg><div class="t" style="left:64.50px;top:1033.66px;font-size:14.1px;line-height:14.1px;color:#ffffff;transform-origin:0 11.94px;">USD/INR</div><div class="t" style="left:64.50px;top:1053.38px;font-size:14.2px;line-height:14.2px;color:#f3a0ab;transform-origin:0 12.02px;">-0.28%</div><svg style="position:absolute;left:694px;top:1035px" width="31" height="31" viewBox="0 0 31 31"><rect x="0.8" y="0.6" width="14" height="14" rx="1" fill="url(#winl)"/><rect x="16" y="0.6" width="14" height="14" rx="1" fill="url(#winl)"/><rect x="0.8" y="15.8" width="14" height="14" rx="1" fill="url(#winl)"/><rect x="16" y="15.8" width="14" height="14" rx="1" fill="url(#winl)"/></svg><div style="position:absolute;left:741px;top:1030px;width:275px;height:41px;background:rgba(160,175,230,0.2);border-radius:21px;border:1px solid rgba(200,210,255,0.16)"></div><svg style="position:absolute;left:754px;top:1039px" width="22" height="22" viewBox="0 0 22 22"><circle cx="9.4" cy="9.4" r="6.6" fill="none" stroke="#e8e8f0" stroke-width="1.8"/><path d="M14.2 14.2 L19.2 19.2" stroke="#e8e8f0" stroke-width="2" stroke-linecap="round"/></svg><div class="t" style="left:787.00px;top:1044.34px;font-size:15.9px;line-height:15.9px;color:#dfe1ea;transform-origin:0 13.46px;">Search</div><div style="position:absolute;left:951.5px;top:1036px;width:29px;height:29px;border-radius:50%;background:radial-gradient(circle at 40% 35%,#eadba0 0%,#c4a650 55%,#8c7228 100%)"></div><svg style="position:absolute;left:951.5px;top:1036px" width="29" height="29" viewBox="0 0 29 29"><path transform="translate(29,0) scale(-1,1)" d="M12 6 Q16 4.5 18 8 Q19 11 17.6 13 L19.4 15.4 L17.8 16.2 Q18 19 15.6 19.6 L16 23.5 Q20 24.5 22 26.5 Q15 29 8 26 Q10 23 12.6 21.6 Q10.6 17 10.4 12.5 Q10.2 8 12 6 Z" fill="#9c8236" opacity="0.75"/></svg><svg style="position:absolute;left:981px;top:1036px" width="24" height="28" viewBox="0 0 24 28"><path d="M6 1.5 L21 3.5 L19 24 L3 22 Z" fill="#5c84c8"/><path d="M8 4 L19 5.6 L17.6 17 L6.6 15.6 Z" fill="#e8dcc8"/><ellipse cx="11" cy="20.5" rx="5" ry="2.2" fill="#c8d8ee"/></svg><svg style="position:absolute;left:1030px;top:1035px" width="33" height="31" viewBox="0 0 33 31"><rect x="1" y="8.6" width="22.4" height="20" rx="1.6" fill="#7a7a7a"/><rect x="8.4" y="1" width="23" height="20" rx="1.6" fill="url(#tv1)"/><rect x="8.4" y="8.6" width="15" height="12.4" fill="#bcbcbc"/></svg><svg style="position:absolute;left:1085px;top:1034px" width="32" height="32" viewBox="0 0 32 32"><circle cx="15.8" cy="15.8" r="14.9" fill="#fbc118"/><path d="M15.8 15.8 L3 8.4 A14.9 14.9 0 0 1 28.6 8.4 Z" fill="#e5382d"/><path d="M15.8 15.8 L3 8.4 A14.9 14.9 0 0 0 15.8 30.7 L23.2 17 Z" fill="#2fa84f"/><path d="M15.8 15.8 L28.6 8.4 L15.8 8.4 Z" fill="#e5382d"/><circle cx="15.8" cy="15.8" r="6.9" fill="#fff"/><circle cx="15.8" cy="15.8" r="5.5" fill="#3a7ee8"/></svg><div style="position:absolute;left:1097px;top:1070px;width:8px;height:4px;background:#9ea2b0;border-radius:2px"></div><div style="position:absolute;left:1131px;top:1025px;width:50px;height:50px;background:rgba(130,145,200,0.16);border-radius:6px"></div><svg style="position:absolute;left:1140px;top:1036px" width="32" height="29" viewBox="0 0 32 29"><path d="M1 3 Q1 1 3 1 H11 L14 3.6 H29 Q31 3.6 31 5.6 V8 H1 Z" fill="#e8a80c"/><rect x="1" y="4.6" width="30" height="22.6" rx="1.5" fill="url(#tfold)"/><rect x="8" y="16.5" width="16" height="11.5" rx="2" fill="#1a7ad4"/><rect x="11" y="18.8" width="10" height="2" fill="#0b4f9a"/></svg><div style="position:absolute;left:1146px;top:1070px;width:20px;height:4px;background:#4cc2ff;border-radius:2px"></div><svg style="position:absolute;left:1195px;top:1035px" width="32" height="31" viewBox="0 0 32 31"><path d="M8.6 6.4 V2.6 Q8.6 1.2 10 1.2 H21.6 Q23 1.2 23 2.6 V6.4" fill="none" stroke="#27a8f0" stroke-width="2"/><path d="M1.2 5 H30.2 V26 Q30.2 29.8 26.4 29.8 H5 Q1.2 29.8 1.2 26 Z" fill="url(#store)"/><rect x="9.6" y="11.2" width="5.4" height="5.4" fill="#f25022"/><rect x="16" y="11.2" width="5.4" height="5.4" fill="#7fba00"/><rect x="9.6" y="17.6" width="5.4" height="5.4" fill="#00a4ef"/><rect x="16" y="17.6" width="5.4" height="5.4" fill="#ffb900"/></svg><svg style="position:absolute;left:1681px;top:1044px" width="18" height="11" viewBox="0 0 18 11"><path d="M2 9 L9 2.2 L16 9" fill="none" stroke="#f0f0f0" stroke-width="1.6"/></svg><div class="t" style="left:1723.50px;top:1035.33px;font-size:13.2px;line-height:13.2px;color:#f4f4f4;transform-origin:0 11.17px;">ENG</div><div class="t" style="left:1729.00px;top:1054.83px;font-size:13.2px;line-height:13.2px;color:#f4f4f4;transform-origin:0 11.17px;">US</div><svg style="position:absolute;left:1774px;top:1041px" width="22" height="17" viewBox="0 0 22 17"><path d="M1.5 6 Q11 -2.5 20.5 6" fill="none" stroke="#fff" stroke-width="1.6"/><path d="M4.6 9 Q11 3 17.4 9" fill="none" stroke="#fff" stroke-width="1.6"/><path d="M7.8 12 Q11 9.2 14.2 12" fill="none" stroke="#fff" stroke-width="1.6"/><circle cx="11" cy="14.6" r="1.6" fill="#fff"/></svg><svg style="position:absolute;left:1803px;top:1040px" width="24" height="20" viewBox="0 0 24 20"><path d="M1.8 7.2 H5.6 L10.4 2.4 V17.6 L5.6 12.8 H1.8 Z" fill="none" stroke="#fff" stroke-width="1.5" stroke-linejoin="round"/><path d="M13.8 7 Q15.6 10 13.8 13" fill="none" stroke="#fff" stroke-width="1.5"/><path d="M16.6 4.6 Q19.8 10 16.6 15.4" fill="none" stroke="#fff" stroke-width="1.5"/><path d="M19.4 2.2 Q24 10 19.4 17.8" fill="none" stroke="#fff" stroke-width="1.5"/></svg><svg style="position:absolute;left:1834px;top:1039px" width="23" height="19" viewBox="0 0 23 19"><rect x="1.6" y="5.6" width="17" height="11.6" rx="2" fill="none" stroke="#fff" stroke-width="1.5"/><rect x="19" y="9" width="2.4" height="4.8" rx="0.8" fill="#fff"/><path d="M4 15.6 L10 8.5 L16.8 8.5 L16.8 15.6 Z" fill="#fff"/><path d="M7 1 L4.2 6.8 H8 L5.8 11.6" fill="none" stroke="#fff" stroke-width="1.3"/></svg><svg style="position:absolute;left:1875px;top:1040px" width="20" height="22" viewBox="0 0 20 22"><path d="M9.9 1.2 Q16 1.2 16 8 V13.6 L18.4 17 H1.4 L3.8 13.6 V8 Q3.8 1.2 9.9 1.2 Z" fill="#8fdcf4"/><path d="M7 18.6 Q9.9 22 12.8 18.6 Z" fill="#8fdcf4"/></svg><div style="position:absolute;left:600px;top:100px;width:107px;height:63px;border:5px solid #e51d1d"></div><div style="position:absolute;left:538px;top:577px;width:229px;height:50px;border:5px solid #e51d1d"></div><div style="position:absolute;left:765px;top:746px;width:278px;height:45px;border:5px solid #e51d1d"></div></body></html>
